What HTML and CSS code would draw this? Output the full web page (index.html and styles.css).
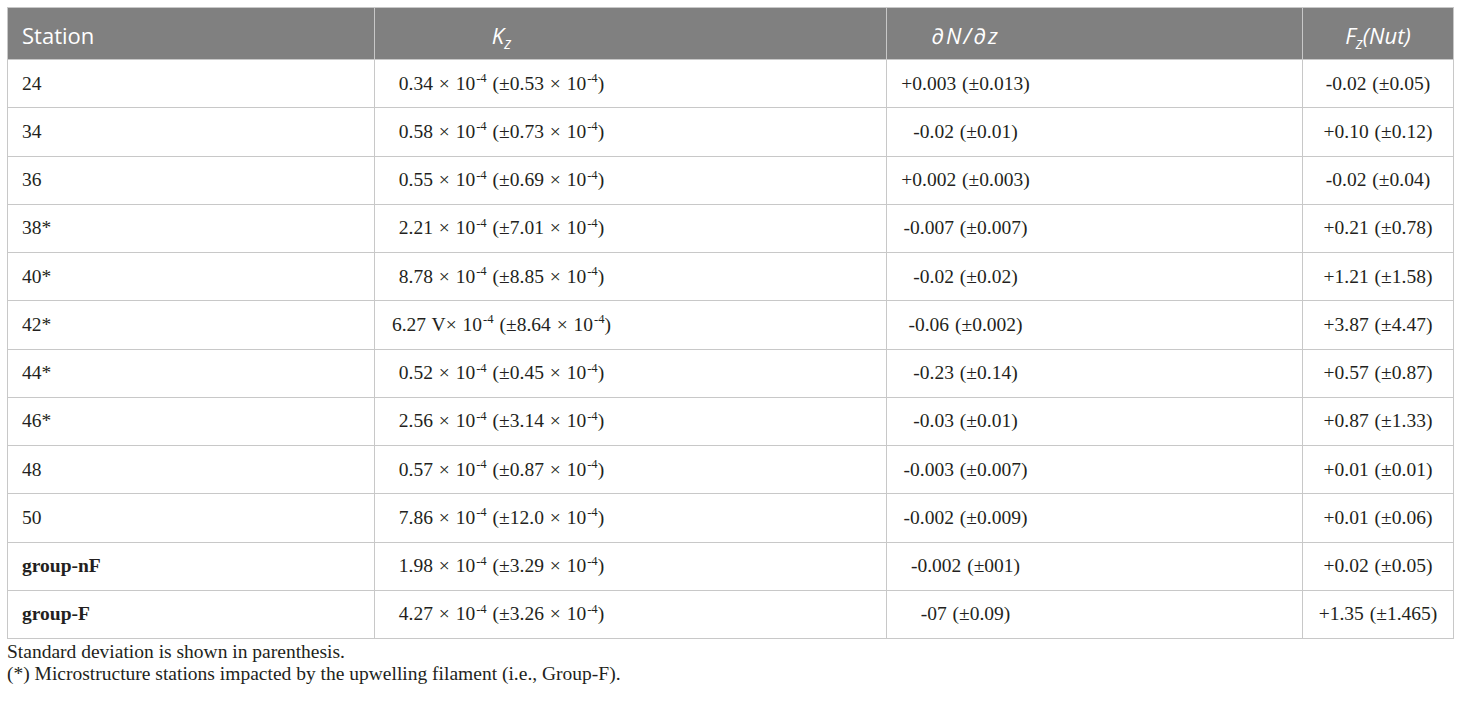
FILE: index.html
```html
<!DOCTYPE html>
<html lang="en">
<head>
<meta charset="utf-8">
<title>Table</title>
<link rel="stylesheet" href="styles.css">
</head>
<body>
<table class="data">
  <colgroup>
    <col class="c1"><col class="c2"><col class="c3"><col class="c4">
  </colgroup>
  <thead>
    <tr>
      <th class="left">Station</th>
      <th class="mid"><i>K<sub>z</sub></i></th>
      <th class="mid"><i class="deriv">∂N/∂z</i></th>
      <th class="ctr"><i>F<sub>z</sub>(Nut)</i></th>
    </tr>
  </thead>
  <tbody>
    <tr><td class="left">24</td><td class="mid">0.34 × 10<sup>-4</sup> (±0.53 × 10<sup>-4</sup>)</td><td class="mid">+0.003 (±0.013)</td><td class="ctr">-0.02 (±0.05)</td></tr>
    <tr><td class="left">34</td><td class="mid">0.58 × 10<sup>-4</sup> (±0.73 × 10<sup>-4</sup>)</td><td class="mid">-0.02 (±0.01)</td><td class="ctr">+0.10 (±0.12)</td></tr>
    <tr><td class="left">36</td><td class="mid">0.55 × 10<sup>-4</sup> (±0.69 × 10<sup>-4</sup>)</td><td class="mid">+0.002 (±0.003)</td><td class="ctr">-0.02 (±0.04)</td></tr>
    <tr><td class="left">38*</td><td class="mid">2.21 × 10<sup>-4</sup> (±7.01 × 10<sup>-4</sup>)</td><td class="mid">-0.007 (±0.007)</td><td class="ctr">+0.21 (±0.78)</td></tr>
    <tr><td class="left">40*</td><td class="mid">8.78 × 10<sup>-4</sup> (±8.85 × 10<sup>-4</sup>)</td><td class="mid">-0.02 (±0.02)</td><td class="ctr">+1.21 (±1.58)</td></tr>
    <tr><td class="left">42*</td><td class="mid">6.27 V× 10<sup>-4</sup> (±8.64 × 10<sup>-4</sup>)</td><td class="mid">-0.06 (±0.002)</td><td class="ctr">+3.87 (±4.47)</td></tr>
    <tr><td class="left">44*</td><td class="mid">0.52 × 10<sup>-4</sup> (±0.45 × 10<sup>-4</sup>)</td><td class="mid">-0.23 (±0.14)</td><td class="ctr">+0.57 (±0.87)</td></tr>
    <tr><td class="left">46*</td><td class="mid">2.56 × 10<sup>-4</sup> (±3.14 × 10<sup>-4</sup>)</td><td class="mid">-0.03 (±0.01)</td><td class="ctr">+0.87 (±1.33)</td></tr>
    <tr><td class="left">48</td><td class="mid">0.57 × 10<sup>-4</sup> (±0.87 × 10<sup>-4</sup>)</td><td class="mid">-0.003 (±0.007)</td><td class="ctr">+0.01 (±0.01)</td></tr>
    <tr><td class="left">50</td><td class="mid">7.86 × 10<sup>-4</sup> (±12.0 × 10<sup>-4</sup>)</td><td class="mid">-0.002 (±0.009)</td><td class="ctr">+0.01 (±0.06)</td></tr>
    <tr><td class="left"><b>group-nF</b></td><td class="mid">1.98 × 10<sup>-4</sup> (±3.29 × 10<sup>-4</sup>)</td><td class="mid">-0.002 (±001)</td><td class="ctr">+0.02 (±0.05)</td></tr>
    <tr><td class="left"><b>group-F</b></td><td class="mid">4.27 × 10<sup>-4</sup> (±3.26 × 10<sup>-4</sup>)</td><td class="mid">-07 (±0.09)</td><td class="ctr">+1.35 (±1.465)</td></tr>
  </tbody>
</table>
<div class="notes">
  <p>Standard deviation is shown in parenthesis.</p>
  <p>(*) Microstructure stations impacted by the upwelling filament (i.e., Group-F).</p>
</div>
</body>
</html>
```

FILE: styles.css
```css
html, body {
  margin: 0;
  padding: 0;
  background: #ffffff;
}

body {
  padding: 7px;
  font-family: "Liberation Serif", "Times New Roman", serif;
  color: #231f20;
}

.data {
  border-collapse: collapse;
  table-layout: fixed;
  width: 1446px;
  font-size: 19.5px;
}

.c1 { width: 367px; }
.c2 { width: 512px; }
.c3 { width: 416px; }
.c4 { width: 151px; }

.data th,
.data td {
  border: 1px solid #c8c8c8;
  padding: 0 14px;
  vertical-align: middle;
  white-space: nowrap;
}

.data thead th {
  background: #808080;
  color: #ffffff;
  font-family: "Open Sans", "Noto Sans", sans-serif;
  font-weight: normal;
  font-size: 22px;
  height: 48px;
  padding-top: 3px;
}

.data thead .deriv {
  letter-spacing: 2px;
}

.data tbody td {
  height: 47.25px;
  word-spacing: 1px;
}

.left { text-align: left; }
.mid { text-align: center; padding-right: 272px !important; }
.ctr { text-align: center; }

.data sub {
  font-size: 0.72em;
  vertical-align: -0.3em;
  line-height: 0;
}

.data sup {
  font-size: 0.65em;
  vertical-align: 0.6em;
  line-height: 0;
  margin-left: 1px;
}

.data b {
  font-weight: bold;
}

.notes {
  font-size: 19.5px;
  line-height: 22px;
  margin-top: 2px;
}

.notes p {
  margin: 0;
}
```
